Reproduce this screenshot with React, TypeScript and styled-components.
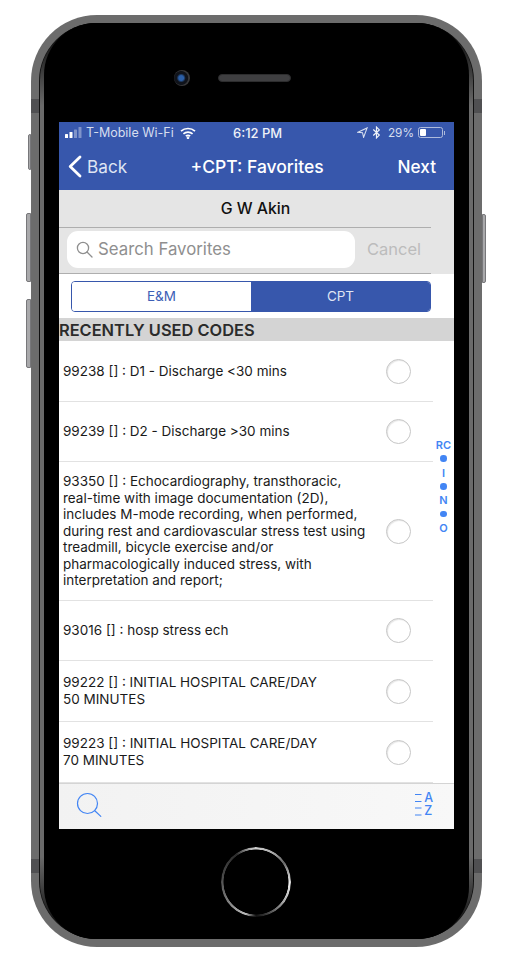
import React from "react";
import styled, { createGlobalStyle } from "styled-components";

const Global = createGlobalStyle`
  html, body { margin: 0; padding: 0; background: #fff; }
  body { font-family: Inter, "Liberation Sans", Arial, sans-serif; }
`;

const Page = styled.div`
  width: 526px;
  height: 976px;
  padding: 15px 0 0 31px;
  box-sizing: border-box;
  overflow: hidden;
`;

const Phone = styled.div`
  position: relative;
  width: 451px;
  height: 932px;
  padding: 8px 8px;
  box-sizing: border-box;
  border-radius: 66px;
  background: #6c6c6c;
  display: flex;
`;

const GroundShadow = styled.div`
  position: absolute;
  left: -16px;
  right: -16px;
  bottom: -5px;
  height: 8px;
  border-radius: 50%;
  background: rgba(0, 0, 0, 0.22);
  filter: blur(3px);
  z-index: -1;
`;

const SideKey = styled.div<{ $side: "left" | "right"; $top: number; $height: number; $width: number }>`
  position: absolute;
  top: ${(p) => p.$top}px;
  height: ${(p) => p.$height}px;
  width: ${(p) => p.$width}px;
  ${(p) => (p.$side === "left" ? `left: -${p.$width}px;` : `right: -${p.$width}px;`)}
  background: #a9a9ab;
  border: 1px solid #77777a;
  box-sizing: border-box;
  border-radius: ${(p) => (p.$side === "left" ? "2px 0 0 2px" : "0 2px 2px 0")};
`;

const Band = styled.div<{ $side: "left" | "right"; $top: number }>`
  position: absolute;
  top: ${(p) => p.$top}px;
  ${(p) => p.$side}: 0;
  width: 8px;
  height: 14px;
  background: #505052;
`;

const Seam = styled.div`
  flex: 1;
  display: flex;
  padding: 0 1px;
  background: #111;
  border-radius: 58px;
`;

const Rim = styled.div`
  flex: 1;
  display: flex;
  padding: 0 4px;
  border-radius: 57px;
  background: linear-gradient(to bottom, #000 0, #2c2c2c 4%, #6a6a6a 9%, #6a6a6a 91%, #2c2c2c 96%, #000 100%);
`;

const Face = styled.div`
  flex: 1;
  display: flex;
  flex-direction: column;
  align-items: center;
  background: #000;
  border-radius: 52px;
  overflow: hidden;
`;

const TopArea = styled.div`
  align-self: stretch;
  height: 99px;
  flex: none;
  display: flex;
  align-items: flex-start;
  gap: 28px;
  padding: 47px 0 0 130px;
  box-sizing: border-box;
`;

const Camera = styled.div`
  width: 16px;
  height: 16px;
  border-radius: 50%;
  background: radial-gradient(circle at 45% 50%, #2b5fa8 0 20%, #10131a 38%, #10131a 55%, #38383a 62%, #38383a 100%);
`;

const Speaker = styled.div`
  width: 73px;
  height: 8px;
  margin-top: 4px;
  border-radius: 4px;
  background: #3f3f41;
  border: 1px solid #2d2d2e;
  box-sizing: border-box;
`;

const Screen = styled.div`
  width: 395px;
  height: 707px;
  flex: none;
  background: #fff;
  display: flex;
  flex-direction: column;
  position: relative;
  color: #111;
`;

const StatusBar = styled.div`
  height: 20px;
  flex: none;
  display: flex;
  align-items: center;
  justify-content: space-between;
  background: #3757ac;
  color: #d6deef;
  font-size: 12.5px;
  padding: 1px 7px 0 6px;
  box-sizing: border-box;
  position: relative;
`;

const StatusGroup = styled.div`
  display: flex;
  align-items: center;
  gap: 4px;
`;

const StatusIcons = styled(StatusGroup)`
  gap: 3px;
`;

const Clock = styled.span`
  position: absolute;
  left: 174px;
  color: #eef1f8;
  font-weight: 500;
  font-size: 13px;
`;

const Percent = styled.span`
  font-size: 11.8px;
`;

const BatteryWrap = styled.div`
  display: flex;
  align-items: center;
  gap: 1px;
  margin: 0 2px 0 1px;
`;

const Battery = styled.div`
  width: 25px;
  height: 11px;
  border: 1px solid #aebbdc;
  border-radius: 2.5px;
  box-sizing: border-box;
  padding: 1px;
  display: flex;
`;

const BatteryFill = styled.div`
  width: 6px;
  background: #fff;
  border-radius: 1px;
`;

const BatteryNub = styled.div`
  width: 1px;
  height: 4px;
  background: #aebbdc;
`;

const NavBar = styled.div`
  height: 48px;
  flex: none;
  display: flex;
  align-items: center;
  justify-content: space-between;
  background: #3757ac;
  color: #fff;
  padding: 0 18px 0 9px;
  box-sizing: border-box;
  font-size: 17.2px;
  position: relative;
`;

const BackLink = styled.div`
  display: flex;
  align-items: center;
  gap: 5px;
  color: #dfe5f3;
`;

const NavTitle = styled.div`
  font-weight: 500;
  font-size: 17.5px;
  position: absolute;
  left: 131.5px;
`;

const NextLink = styled.div`
  font-weight: 500;
`;

const GreyBand = styled.div`
  background: #e5e5e5;
  flex: none;
  display: flex;
  flex-direction: column;
  height: 84px;
`;

const PatientRow = styled.div`
  height: 37px;
  flex: none;
  margin-right: 23px;
  border-bottom: 1px solid #aeaeae;
  display: flex;
  align-items: center;
  justify-content: center;
  font-size: 15.8px;
  font-weight: 500;
  padding-left: 21px;
`;

const SearchRow = styled.div`
  height: 46px;
  flex: none;
  margin-right: 23px;
  border-bottom: 1px solid #aeaeae;
  display: flex;
  align-items: center;
  padding: 0 10px 3px 8px;
  box-sizing: border-box;
  justify-content: space-between;
`;

const SearchField = styled.div`
  width: 288px;
  height: 37px;
  background: #fff;
  border-radius: 11px;
  display: flex;
  align-items: center;
  gap: 5px;
  padding-left: 9px;
  box-sizing: border-box;
  color: #8f8f8f;
  font-size: 16.8px;
`;

const Cancel = styled.span`
  color: #bcbcbc;
  font-size: 16.5px;
`;

const Segments = styled.div`
  margin: 7px 23px 0 12px;
  height: 31px;
  flex: none;
  display: grid;
  grid-template-columns: 179px 1fr;
  border: 1px solid #3757ac;
  border-radius: 4px;
  overflow: hidden;
  box-sizing: border-box;
  font-size: 13.5px;
  line-height: 29px;
`;

const Segment = styled.div<{ $active?: boolean }>`
  display: flex;
  align-items: flex-start;
  justify-content: center;
  background: ${(p) => (p.$active ? "#3757ac" : "#fff")};
  color: ${(p) => (p.$active ? "#dfe5f3" : "#3d5fb6")};
`;

const SectionHeader = styled.div`
  margin-top: 6px;
  height: 23px;
  flex: none;
  background: #d4d4d4;
  color: #2b2b2b;
  font-weight: 600;
  font-size: 16.4px;
  display: flex;
  align-items: center;
`;

const List = styled.div`
  flex: 1;
  min-height: 0;
  position: relative;
  display: flex;
  flex-direction: column;
`;

const Row = styled.div<{ $height: number }>`
  height: ${(p) => p.$height}px;
  width: 374px;
  flex: none;
  box-sizing: border-box;
  border-bottom: 1px solid #e2e2e2;
  padding-left: 4px;
  display: flex;
  align-items: center;
`;

const RowText = styled.div`
  width: 323px;
  flex: none;
  font-size: 13.5px;
  line-height: 16.6px;
  white-space: pre-line;
  color: #1a1a1a;
`;

const Radio = styled.div`
  width: 25px;
  height: 25px;
  border-radius: 50%;
  border: 1.5px solid #c6c6c6;
  box-sizing: border-box;
  box-shadow: inset 1px 1px 1px rgba(0, 0, 0, 0.1);
`;

const IndexBar = styled.div`
  position: absolute;
  right: 1px;
  top: 97px;
  width: 19px;
  display: flex;
  flex-direction: column;
  align-items: center;
  color: #4285f4;
  font-size: 11px;
  font-weight: 600;
`;

const IndexItem = styled.div`
  height: 13.8px;
  display: flex;
  align-items: center;
  justify-content: center;
`;

const IndexDot = styled.span`
  width: 6.5px;
  height: 6.5px;
  border-radius: 50%;
  background: #4285f4;
`;

const Footer = styled.div`
  height: 46px;
  flex: none;
  border-top: 1px solid #d4d4d4;
  background: linear-gradient(to right, #f2f2f2, #f8f8f8);
  display: flex;
  align-items: center;
  justify-content: space-between;
  padding: 0 21px 4px 17px;
  box-sizing: border-box;
`;

const SortLetters = styled.div`
  display: flex;
  flex-direction: column;
  font-size: 12.5px;
  line-height: 12.5px;
  font-weight: 500;
  color: #4285f4;
`;

const SortIcon = styled.div`
  display: flex;
  gap: 2px;
  align-items: center;
`;

const SortDashes = styled.svg`
  display: block;
`;

const HomeArea = styled.div`
  flex: 1;
  display: flex;
  align-items: flex-start;
  justify-content: center;
  padding-top: 18px;
  align-self: stretch;
`;

const HomeRing = styled.div`
  width: 70px;
  height: 70px;
  margin-right: 1px;
  border-radius: 50%;
  background: conic-gradient(#cfcfcf 0deg, #aaa 30deg, #666 55deg, #f0f0f0 92deg, #aaa 125deg, #333 165deg, #111 180deg, #bbb 198deg, #777 240deg, #444 285deg, #2c2c2c 325deg, #bbb 352deg, #cfcfcf 360deg);
  -webkit-mask: radial-gradient(circle, transparent 32.2px, #000 32.8px);
  mask: radial-gradient(circle, transparent 32.2px, #000 32.8px);
`;

const rows: { h: number; t: string }[] = [
  { h: 61, t: "99238 [] : D1 - Discharge <30 mins" },
  { h: 60, t: "99239 [] : D2 - Discharge >30 mins" },
  {
    h: 139,
    t: "93350 [] : Echocardiography, transthoracic,\nreal-time with image documentation (2D),\nincludes M-mode recording, when performed,\nduring rest and cardiovascular stress test using\ntreadmill, bicycle exercise and/or\npharmacologically induced stress, with\ninterpretation and report;",
  },
  { h: 60, t: "93016 [] : hosp stress ech" },
  { h: 61, t: "99222 [] : INITIAL HOSPITAL CARE/DAY\n50 MINUTES" },
  { h: 61, t: "99223 [] : INITIAL HOSPITAL CARE/DAY\n70 MINUTES" },
];

export default function App() {
  return (
    <Page>
      <Global />
      <Phone>
        <GroundShadow />
        <SideKey $side="left" $top={119} $height={36} $width={3} />
        <SideKey $side="left" $top={198} $height={69} $width={5} />
        <SideKey $side="left" $top={284} $height={69} $width={5} />
        <SideKey $side="right" $top={199} $height={69} $width={4} />
        <Band $side="left" $top={84} />
        <Band $side="right" $top={84} />
        <Band $side="left" $top={844} />
        <Band $side="right" $top={844} />
        <Seam>
          <Rim>
            <Face>
              <TopArea>
                <Camera />
                <Speaker />
              </TopArea>
              <Screen>
                <StatusBar>
                  <StatusGroup>
                    <svg width="17" height="11" viewBox="0 0 17 11" aria-hidden="true">
                      <rect x="0" y="7" width="3" height="4" rx="0.6" fill="#fff" />
                      <rect x="4.5" y="5" width="3" height="6" rx="0.6" fill="#fff" />
                      <rect x="9" y="2.5" width="3" height="8.5" rx="0.6" fill="#7f93c9" />
                      <rect x="13.5" y="0" width="3" height="11" rx="0.6" fill="#7f93c9" />
                    </svg>
                    <span>T-Mobile Wi-Fi</span>
                    <svg width="16" height="12" viewBox="0 0 16 12" fill="none" stroke="#fff" strokeWidth="1.7" aria-hidden="true" style={{ marginLeft: 2 }}>
                      <path d="M1 4.2C5 .6 11 .6 15 4.2" />
                      <path d="M3.4 6.8c2.6-2.3 6.6-2.3 9.2 0" />
                      <path d="M5.8 9.2c1.3-1.1 3.1-1.1 4.4 0" />
                      <circle cx="8" cy="10.8" r="0.5" fill="#fff" />
                    </svg>
                  </StatusGroup>
                  <Clock>6:12 PM</Clock>
                  <StatusIcons>
                    <svg width="11" height="11" viewBox="0 0 10 10" fill="none" stroke="#d6deef" strokeWidth="1" aria-hidden="true">
                      <path d="M.8 4.8 9.2.8 6 9.4 5 5.2z" />
                    </svg>
                    <svg width="9" height="13" viewBox="0 0 8 12" fill="none" stroke="#f0f3f9" strokeWidth="1.1" aria-hidden="true" style={{ margin: "0 4px 0 1px" }}>
                      <path d="M1 3.2 6.6 8.4 4 11V1l2.6 2.6L1 8.8" />
                    </svg>
                    <Percent>29%</Percent>
                    <BatteryWrap>
                      <Battery>
                        <BatteryFill />
                      </Battery>
                      <BatteryNub />
                    </BatteryWrap>
                  </StatusIcons>
                </StatusBar>
                <NavBar>
                  <BackLink>
                    <svg width="14" height="23" viewBox="0 0 14 23" fill="none" stroke="#fff" strokeWidth="2.8" strokeLinecap="round" strokeLinejoin="round" aria-hidden="true">
                      <path d="M12 2 2.2 11.5 12 21" />
                    </svg>
                    <span>Back</span>
                  </BackLink>
                  <NavTitle>+CPT: Favorites</NavTitle>
                  <NextLink>Next</NextLink>
                </NavBar>
                <GreyBand>
                  <PatientRow>G W Akin</PatientRow>
                  <SearchRow>
                    <SearchField>
                      <svg width="17" height="17" viewBox="0 0 17 17" fill="none" stroke="#8f8f8f" strokeWidth="1.3" aria-hidden="true">
                        <circle cx="7" cy="7" r="5.6" />
                        <path d="m11 11 5 5" strokeLinecap="round" />
                      </svg>
                      <span>Search Favorites</span>
                    </SearchField>
                    <Cancel>Cancel</Cancel>
                  </SearchRow>
                </GreyBand>
                <Segments>
                  <Segment>E&amp;M</Segment>
                  <Segment $active>CPT</Segment>
                </Segments>
                <SectionHeader>RECENTLY USED CODES</SectionHeader>
                <List>
                  {rows.map((r) => (
                    <Row key={r.t} $height={r.h}>
                      <RowText>{r.t}</RowText>
                      <Radio />
                    </Row>
                  ))}
                  <IndexBar>
                    <IndexItem>RC</IndexItem>
                    <IndexItem><IndexDot /></IndexItem>
                    <IndexItem>I</IndexItem>
                    <IndexItem><IndexDot /></IndexItem>
                    <IndexItem>N</IndexItem>
                    <IndexItem><IndexDot /></IndexItem>
                    <IndexItem>O</IndexItem>
                  </IndexBar>
                </List>
                <Footer>
                  <svg width="26" height="26" viewBox="0 0 26 26" fill="none" stroke="#4285f4" strokeWidth="1.2" aria-hidden="true">
                    <circle cx="11.5" cy="11.5" r="10" />
                    <path d="m18.8 18.8 6 5.6" strokeLinecap="round" />
                  </svg>
                  <SortIcon>
                    <SortDashes width="8" height="24" viewBox="0 0 8 24" stroke="#4285f4" strokeWidth="1.1" aria-hidden="true">
                      <path d="M1 1.5h6.5M1 8.5h6.5M1 15h6.5M1 22h6.5" />
                    </SortDashes>
                    <SortLetters>
                      <span>A</span>
                      <span>Z</span>
                    </SortLetters>
                  </SortIcon>
                </Footer>
              </Screen>
              <HomeArea>
                <HomeRing />
              </HomeArea>
            </Face>
          </Rim>
        </Seam>
      </Phone>
    </Page>
  );
}
